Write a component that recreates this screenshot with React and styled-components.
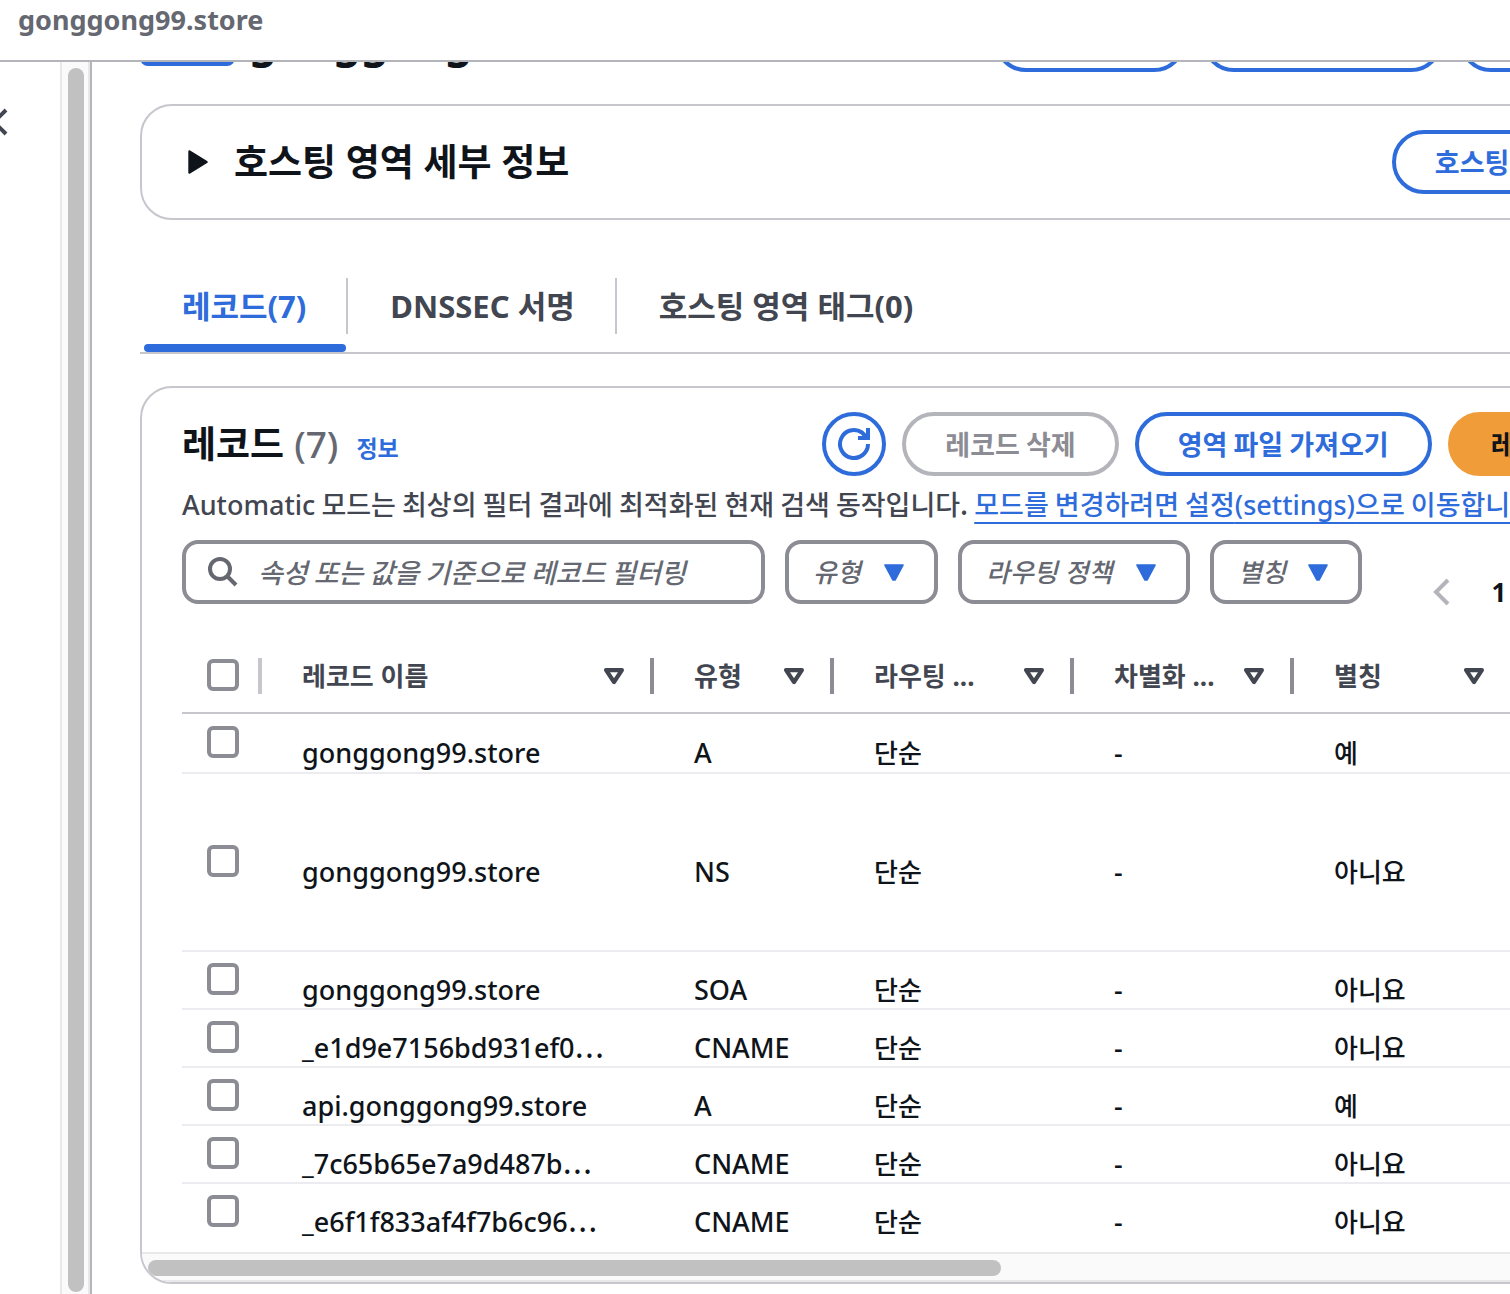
import React from "react";
import styled, { createGlobalStyle, css } from "styled-components";

const color = {
  text: "#0f141a",
  body: "#424650",
  muted: "#656871",
  link: "#2e6bdb",
  control: "#8c8c94",
  disabled: "#b4b4bb",
  line: "#c6c6cd",
  rowLine: "#ebebf0",
  primary: "#f09d39",
  track: "#fafafa",
  trackLine: "#e8e8e8",
  thumb: "#c1c1c1",
};

const latinFont = `"Noto Sans", "Noto Sans CJK KR", sans-serif`;
const koreanFont = `"Noto Sans CJK KR", "Noto Sans", sans-serif`;

const GlobalStyle = createGlobalStyle`
  *, *::before, *::after { box-sizing: border-box; }
  body {
    margin: 0;
    background: #fff;
    color: ${color.text};
    font-family: ${latinFont};
    font-size: 26px;
    font-weight: 500;
    line-height: 40px;
  }
  button, input, select { font: inherit; color: inherit; margin: 0; }
  h1, h2, p { margin: 0; }
`;

const Latin = styled.span`
  font-family: ${latinFont};
  line-height: 1;
`;

const Korean = styled.span`
  font-family: ${koreanFont};
  line-height: 1;
`;

const Shell = styled.div`
  display: flex;
  flex-direction: column;
  height: 100vh;
  overflow: hidden;
`;

const TopBar = styled.header`
  flex: none;
  height: 62px;
  padding: 0 18px;
  border-bottom: 2px solid ${color.disabled};
  color: ${color.muted};
  font-size: 27px;
  font-weight: 700;
`;

const Body = styled.div`
  flex: 1;
  display: flex;
  min-height: 0;
`;

const SideNav = styled.nav`
  flex: none;
  display: flex;
  width: 92px;
  border-right: 2px solid ${color.disabled};
`;

const NavPane = styled.div`
  flex: 1;
  overflow: hidden;
  padding-top: 44px;
`;

const CollapseButton = styled.button`
  display: block;
  width: 32px;
  height: 32px;
  margin-left: -20px;
  padding: 0;
  border: 0;
  background: none;
`;

const VerticalTrack = styled.div`
  width: 30px;
  padding: 6px 4px 2px 6px;
  border: solid ${color.trackLine};
  border-width: 0 2px;
  background: ${color.track};
`;

const VerticalThumb = styled.div`
  width: 16px;
  height: 100%;
  border-radius: 8px;
  background: ${color.thumb};
`;

const Main = styled.main`
  flex: 1;
  min-width: 0;
  overflow: hidden;
  padding: 0 48px;
`;

const Content = styled.div`
  display: flex;
  flex-direction: column;
  min-width: 1566px;
  margin-top: -54px;
`;

const TitleRow = styled.div`
  display: flex;
  align-items: center;
  gap: 14px;
  margin-bottom: 32px;
`;

const Badge = styled.span`
  width: 95px;
  height: 48px;
  margin-top: 4px;
  border-radius: 8px;
  background: ${color.link};
`;

const Title = styled.h1`
  flex: 1;
  font-size: 44px;
  line-height: 60px;
`;

const Actions = styled.div`
  display: flex;
  gap: 16px;
  margin-left: auto;
`;

const variants = {
  normal: css`
    border-color: ${color.link};
    color: ${color.link};
    background: #fff;
  `,
  primary: css`
    border-color: ${color.primary};
    color: ${color.text};
    background: ${color.primary};
  `,
};

const Button = styled.button`
  height: 64px;
  padding: 0 39px;
  border: 4px solid;
  border-radius: 32px;
  font-family: ${koreanFont};
  font-size: 27px;
  font-weight: 700;
  white-space: nowrap;
  ${(p) => variants[p.$variant || "normal"]}
  &:disabled {
    border-color: ${color.disabled};
    color: ${color.control};
  }
`;

const IconButton = styled(Button)`
  display: flex;
  align-items: center;
  justify-content: center;
  width: 64px;
  padding: 0;
`;

const Panel = styled.section`
  border: 2px solid ${color.line};
  border-radius: 32px;
  overflow: hidden;
`;

const DetailsBar = styled.div`
  display: flex;
  align-items: center;
  padding: 24px 40px;
`;

const Expander = styled.button`
  display: flex;
  align-items: center;
  gap: 26px;
  padding: 0 6px;
  border: 0;
  background: none;
`;

const Heading = styled.h2`
  font-size: 37px;
  line-height: 48px;
`;

const Tabs = styled.div`
  display: flex;
  margin: 44px 0 32px;
  border-bottom: 2px solid ${color.line};
`;

const Tab = styled.button`
  display: flex;
  flex-direction: column;
  justify-content: space-between;
  height: 88px;
  padding: 14px 0 0;
  border: 0;
  background: none;
  color: ${(p) => (p.$active ? color.link : color.body)};
  font-size: 31px;
  font-weight: 700;
  &::after {
    content: "";
    width: calc(100% - 6px);
    height: 8px;
    margin-left: 4px;
    border-radius: 4px;
    background: ${(p) => (p.$active ? color.link : "transparent")};
  }
`;

const TabLabel = styled.span`
  height: 56px;
  padding: 0 40px 0 42px;
  border-right: 2px solid ${(p) => (p.$last ? "transparent" : color.line)};
  line-height: 56px;
`;

const PanelHead = styled.div`
  display: flex;
  align-items: center;
  padding: 24px 40px 0;
`;

const Counter = styled.span`
  margin-left: 10px;
  color: ${color.muted};
  font-weight: 500;
`;

const InfoLink = styled.a`
  margin: 8px 0 0 18px;
  color: ${color.link};
  font-size: 23px;
  font-weight: 700;
  text-decoration: none;
`;

const Description = styled.p`
  padding: 8px 40px 0;
  color: ${color.body};
  font-family: ${koreanFont};
  font-size: 27px;
  white-space: nowrap;
`;

const InlineLink = styled.a`
  color: ${color.link};
  text-decoration: underline 2px;
  text-underline-offset: 7px;
`;

const Filters = styled.div`
  display: flex;
  align-items: flex-end;
  gap: 20px;
  padding: 16px 40px 0;
`;

const fieldBox = css`
  height: 64px;
  border: 4px solid ${color.control};
  border-radius: 16px;
  background: #fff;
`;

const SearchBox = styled.label`
  ${fieldBox}
  display: flex;
  align-items: center;
  gap: 20px;
  width: 583px;
  padding: 0 20px;
`;

const SearchInput = styled.input`
  flex: 1;
  min-width: 0;
  padding: 0;
  border: 0;
  outline: 0;
  background: none;
  font-family: ${koreanFont};
  font-size: 27px;
  &::placeholder {
    color: ${color.muted};
    font-style: italic;
    opacity: 1;
  }
`;

const SelectBox = styled.label`
  ${fieldBox}
  display: grid;
  align-items: center;
  width: ${(p) => p.$width}px;
  > * {
    grid-area: 1 / 1;
  }
  svg {
    justify-self: end;
    margin-right: 30px;
    pointer-events: none;
  }
`;

const Select = styled.select`
  appearance: none;
  width: 100%;
  height: 56px;
  padding: 0 0 0 24px;
  border: 0;
  outline: 0;
  background: none;
  color: ${color.muted};
  font-style: italic;
`;

const Pager = styled.div`
  display: flex;
  align-items: center;
  gap: 22px;
  height: 64px;
  margin: 0 0 -20px 41px;
`;

const PagerButton = styled.button`
  display: flex;
  align-items: center;
  justify-content: center;
  min-width: 36px;
  height: 40px;
  padding: 0;
  border: 0;
  background: none;
  font-weight: 700;
`;

const TableWrap = styled.div`
  margin: 36px 0 0 40px;
  padding-bottom: 10px;
`;

const Table = styled.table`
  width: 100%;
  table-layout: fixed;
  border-spacing: 0;
`;

const Col = styled.col`
  width: ${(p) => p.$width}px;
`;

const HeadCell = styled.th`
  height: 74px;
  padding: 0;
  border-bottom: 2px solid ${color.line};
  color: ${color.body};
  text-align: left;
`;

const HeadInner = styled.div`
  display: flex;
  align-items: center;
  justify-content: space-between;
  height: 36px;
  border-right: 4px solid ${(p) => (p.$light ? color.line : color.control)};
  padding-left: ${(p) => (p.$light ? 25 : 0)}px;
`;

const SortButton = styled.button`
  flex: 1;
  display: flex;
  align-items: center;
  justify-content: space-between;
  padding: 0 26px 0 40px;
  border: 0;
  background: none;
  font-weight: 700;
  white-space: nowrap;
`;

const Row = styled.tr`
  height: ${(p) => p.$height}px;
  td {
    border-bottom: 2px solid ${color.rowLine};
  }
  &:last-child td {
    border-color: transparent;
  }
`;

const CheckCell = styled.td`
  padding: 0 0 0 25px;
`;

const Cell = styled.td`
  padding: 20px 0 0 40px;
  font-size: ${(p) => (p.$latin ? 27 : 26)}px;
  line-height: 36px;
  white-space: nowrap;
`;

const Checkbox = styled.input`
  appearance: none;
  display: block;
  width: 32px;
  height: 32px;
  margin: 0 0 2px;
  border: 4px solid ${color.control};
  border-radius: 6px;
  background: #fff;
  &:checked {
    border-color: ${color.link};
    background: ${color.link};
  }
`;

const HorizontalTrack = styled.div`
  height: 30px;
  padding: 6px;
  border: solid ${color.trackLine};
  border-width: 2px 0;
  background: ${color.track};
`;

const HorizontalThumb = styled.div`
  width: 55%;
  height: 16px;
  border-radius: 8px;
  background: ${color.thumb};
`;

const Caret = () => (
  <svg width="20" height="17" viewBox="0 0 20 17" aria-hidden="true">
    <path d="M1 1h18L11 16H9z" fill={color.link} stroke={color.link} strokeWidth="1.6" strokeLinejoin="round" />
  </svg>
);

const SortIcon = () => (
  <svg width="20" height="17" viewBox="0 0 20 17" aria-hidden="true">
    <path d="M2.1 2.1h15.8L10 14z" fill="none" stroke={color.body} strokeWidth="4.2" strokeLinejoin="round" />
  </svg>
);

const selects = [
  { id: "type", label: "유형", width: 153 },
  { id: "policy", label: "라우팅 정책", width: 232 },
  { id: "alias", label: "별칭", width: 152 },
];

const columns = [
  { label: "레코드 이름", width: 392 },
  { label: "유형", width: 180 },
  { label: "라우팅 ...", width: 240 },
  { label: "차별화 ...", width: 220 },
  { label: "별칭", width: 220 },
];

const records = [
  { name: "gonggong99.store", type: "A", alias: "예", height: 60 },
  { name: "gonggong99.store", type: "NS", alias: "아니요", height: 178 },
  { name: "gonggong99.store", type: "SOA", alias: "아니요", height: 58 },
  { name: "_e1d9e7156bd931ef0", cut: true, type: "CNAME", alias: "아니요", height: 58 },
  { name: "api.gonggong99.store", type: "A", alias: "예", height: 58 },
  { name: "_7c65b65e7a9d487b", cut: true, type: "CNAME", alias: "아니요", height: 58 },
  { name: "_e6f1f833af4f7b6c96", cut: true, type: "CNAME", alias: "아니요", height: 58 },
];

export default function App() {
  return (
    <>
      <GlobalStyle />
      <Shell>
        <TopBar>gonggong99.store</TopBar>
        <Body>
          <SideNav aria-label="Route 53">
            <NavPane>
              <CollapseButton aria-label="닫기">
                <svg width="32" height="32" viewBox="0 0 32 32" aria-hidden="true">
                  <path d="M26 4L14 16l12 12" fill="none" stroke={color.body} strokeWidth="4" />
                </svg>
              </CollapseButton>
            </NavPane>
            <VerticalTrack>
              <VerticalThumb />
            </VerticalTrack>
          </SideNav>
          <Main>
            <Content>
              <TitleRow>
                <Badge role="img" aria-label="퍼블릭" />
                <Title>gonggong99.store</Title>
                <Actions>
                  <Button>영역 삭제</Button>
                  <Button>레코드 테스트</Button>
                  <Button>쿼리 로깅 구성</Button>
                </Actions>
              </TitleRow>

              <Panel>
                <DetailsBar>
                  <Expander aria-expanded="false" aria-label="호스팅 영역 세부 정보">
                    <svg width="20" height="24" viewBox="0 0 20 24" aria-hidden="true">
                      <path d="M1.5 1.5L18.5 12 1.5 22.5z" fill={color.text} stroke={color.text} strokeWidth="2.4" strokeLinejoin="round" />
                    </svg>
                    <Heading>호스팅 영역 세부 정보</Heading>
                  </Expander>
                  <Actions>
                    <Button>호스팅 영역 편집</Button>
                  </Actions>
                </DetailsBar>
              </Panel>

              <Tabs role="tablist">
                <Tab role="tab" aria-selected="true" $active>
                  <TabLabel>레코드(7)</TabLabel>
                </Tab>
                <Tab role="tab" aria-selected="false">
                  <TabLabel>DNSSEC 서명</TabLabel>
                </Tab>
                <Tab role="tab" aria-selected="false">
                  <TabLabel $last>호스팅 영역 태그(0)</TabLabel>
                </Tab>
              </Tabs>

              <Panel>
                <PanelHead>
                  <Heading>
                    레코드<Counter>(7)</Counter>
                  </Heading>
                  <InfoLink href="#info">정보</InfoLink>
                  <Actions>
                    <IconButton aria-label="새로 고침">
                      <svg width="36" height="36" viewBox="0 0 36 36" aria-hidden="true">
                        <path d="M32 18A14 14 0 1 1 26 6.5L31 11.5" fill="none" stroke={color.link} strokeWidth="4" />
                        <path d="M32 2v10H22" fill="none" stroke={color.link} strokeWidth="4" />
                      </svg>
                    </IconButton>
                    <Button disabled>레코드 삭제</Button>
                    <Button>영역 파일 가져오기</Button>
                    <Button $variant="primary">레코드 생성</Button>
                  </Actions>
                </PanelHead>
                <Description>
                  <Latin>Automatic</Latin> 모드는 최상의 필터 결과에 최적화된 현재 검색 동작입니다.{" "}
                  <InlineLink href="#settings">
                    모드를 변경하려면 설정<Latin>(settings)</Latin>으로 이동합니다.
                  </InlineLink>
                </Description>
                <Filters>
                  <SearchBox>
                    <svg width="32" height="32" viewBox="0 0 32 32" aria-hidden="true">
                      <circle cx="14" cy="13" r="10" fill="none" stroke={color.muted} strokeWidth="4" />
                      <path d="M21 20l9 9" stroke={color.muted} strokeWidth="4" />
                    </svg>
                    <SearchInput aria-label="레코드 필터링" placeholder="속성 또는 값을 기준으로 레코드 필터링" />
                  </SearchBox>
                  {selects.map((s) => (
                    <SelectBox key={s.id} $width={s.width}>
                      <Select aria-label={s.label}>
                        <option>{s.label}</option>
                      </Select>
                      <Caret />
                    </SelectBox>
                  ))}
                  <Pager>
                    <PagerButton aria-label="이전 페이지" disabled>
                      <svg width="20" height="28" viewBox="0 0 20 28" aria-hidden="true">
                        <path d="M17 2L5 14l12 12" fill="none" stroke={color.disabled} strokeWidth="4" />
                      </svg>
                    </PagerButton>
                    <PagerButton aria-current="page">1</PagerButton>
                  </Pager>
                </Filters>

                <TableWrap>
                  <Table>
                    <colgroup>
                      <Col $width={80} />
                      {columns.map((c) => (
                        <Col key={c.label} $width={c.width} />
                      ))}
                      <col />
                    </colgroup>
                    <thead>
                      <tr>
                        <HeadCell>
                          <HeadInner $light>
                            <Checkbox type="checkbox" aria-label="모두 선택" />
                          </HeadInner>
                        </HeadCell>
                        {columns.map((c) => (
                          <HeadCell key={c.label} scope="col">
                            <HeadInner>
                              <SortButton>
                                {c.label}
                                <SortIcon />
                              </SortButton>
                            </HeadInner>
                          </HeadCell>
                        ))}
                        <HeadCell />
                      </tr>
                    </thead>
                    <tbody>
                      {records.map((r, i) => (
                        <Row key={i} $height={r.height}>
                          <CheckCell>
                            <Checkbox type="checkbox" aria-label={r.name} />
                          </CheckCell>
                          <Cell $latin>
                            {r.name}
                            {r.cut && <Korean>…</Korean>}
                          </Cell>
                          <Cell $latin>{r.type}</Cell>
                          <Cell>단순</Cell>
                          <Cell $latin>-</Cell>
                          <Cell>{r.alias}</Cell>
                          <td />
                        </Row>
                      ))}
                    </tbody>
                  </Table>
                </TableWrap>
                <HorizontalTrack>
                  <HorizontalThumb />
                </HorizontalTrack>
              </Panel>
            </Content>
          </Main>
        </Body>
      </Shell>
    </>
  );
}
